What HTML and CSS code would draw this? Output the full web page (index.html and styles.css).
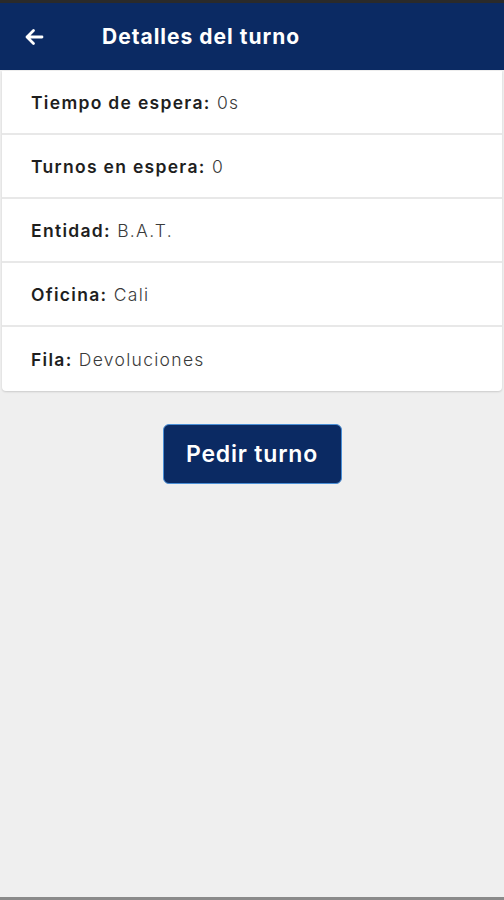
FILE: index.html
```html
<!DOCTYPE html>
<html lang="es">

<head>
    <meta charset="UTF-8">
    <meta name="viewport" content="width=device-width, initial-scale=1.0">
    <title>Detalles del turno</title>
    <link rel="stylesheet" href="styles.css">
</head>

<body>
    <div class="statusbar"></div>
    <header class="topbar">
        <a class="back" href="#">
            <svg width="20" height="18" viewBox="0 0 20 18">
                <path d="M18 9H3M9.5 2.5L3 9l6.5 6.5" fill="none" stroke="#fff" stroke-width="2.8"
                    stroke-linecap="round" stroke-linejoin="round" />
            </svg>
        </a>
        <h1>Detalles del turno</h1>
    </header>
    <section class="card">
        <div class="row"><b>Tiempo de espera:</b> 0s</div>
        <div class="row"><b>Turnos en espera:</b> 0</div>
        <div class="row"><b>Entidad:</b> B.A.T.</div>
        <div class="row"><b>Oficina:</b> Cali</div>
        <div class="row"><b>Fila:</b> Devoluciones</div>
    </section>
    <div class="acciones">
        <button class="btn">Pedir turno</button>
    </div>
    <div class="bottombar"></div>
</body>

</html>
```

FILE: styles.css
```css
html,
body {
    height: 100%;
}

body {
    margin: 0;
    background-color: #efefef;
    font-family: Inter, "Open Sans", sans-serif;
    color: #222;
    display: flex;
    flex-direction: column;
}

.statusbar {
    height: 3px;
    background-color: #2a2a2a;
}

.topbar {
    height: 67px;
    background-color: #0b2a63;
    display: flex;
    align-items: center;
    padding-left: 24px;
}

.back {
    display: flex;
    width: 20px;
}

.topbar h1 {
    margin: 0 0 0 58px;
    color: white;
    font-size: 21px;
    font-weight: 700;
    letter-spacing: 1px;
}

.card {
    background-color: white;
    margin: 1px 2px 0 2px;
    border-radius: 0 0 4px 4px;
    box-shadow: 0 1px 2px rgba(0, 0, 0, 0.15);
}

.row {
    height: 62px;
    display: flex;
    align-items: center;
    padding-left: 29px;
    font-size: 17.5px;
    font-weight: 300;
    letter-spacing: 1.3px;
    color: #3a3a3a;
    border-bottom: 2px solid #e8e8e8;
    white-space: pre;
}

.row:last-child {
    border-bottom: none;
    height: 64px;
}

.row b {
    font-weight: 600;
    color: #1e1e1e;
}

.acciones {
    display: flex;
    justify-content: center;
    padding-top: 33px;
    flex: 1;
}

.btn {
    width: 179px;
    height: 60px;
    background-color: #0b2a63;
    color: white;
    border: 1px solid #4a8fd6;
    border-radius: 6px;
    font-family: inherit;
    font-size: 23px;
    font-weight: 600;
    letter-spacing: 0.8px;
    cursor: pointer;
}

.bottombar {
    height: 3px;
    background-color: #8a8a8a;
}
```
